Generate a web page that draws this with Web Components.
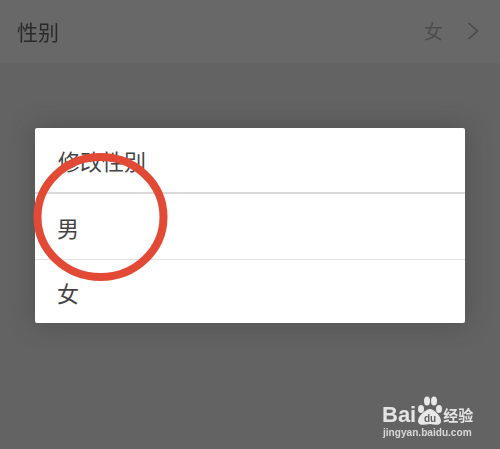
<!DOCTYPE html>
<html lang="zh">
<head>
<meta charset="utf-8">
<style>
html,body{margin:0;padding:0;width:500px;height:449px;overflow:hidden;background:#636363;}
body{font-family:"Noto Sans CJK SC","Liberation Sans",sans-serif;}
</style>
</head>
<body>
<settings-row label="性别" value="女"></settings-row>
<gender-dialog title-text="修改性别">
  <dialog-option>男</dialog-option>
  <dialog-option>女</dialog-option>
</gender-dialog>
<red-circle></red-circle>
<baidu-mark></baidu-mark>

<script>
//top row of the settings page, dimmed by the dialog
class SettingsRow extends HTMLElement {
  constructor(){
    super();
    this.attachShadow({mode:"open"});
    this.shadowRoot.innerHTML = `
    <style>
      :host{display:flex;align-items:center;justify-content:space-between;height:63px;padding:0 21px 0 17px;background:#686868;border-bottom:1px solid #646464;box-sizing:content-box;}
      .label{font-size:21px;color:#2a2a2a;margin-top:-2px;filter:blur(.3px);}
      .right{display:flex;align-items:center;gap:24px;margin-top:-2px;}
      .value{font-size:19px;color:#4c4c4c;filter:blur(.3px);}
      svg{display:block;}
    </style>
    <span class="label"></span>
    <div class="right">
      <span class="value"></span>
      <svg width="12" height="18" viewBox="0 0 12 18"><path d="M1.5 1 L10.5 9 L1.5 17" fill="none" stroke="#4a4a4a" stroke-width="1.6"/></svg>
    </div>`;
  }
  connectedCallback(){
    this.shadowRoot.querySelector(".label").textContent = this.getAttribute("label");
    this.shadowRoot.querySelector(".value").textContent = this.getAttribute("value");
  }
}

class GenderDialog extends HTMLElement {
  constructor(){
    super();
    this.attachShadow({mode:"open"});
    this.shadowRoot.innerHTML = `
    <style>
      :host{display:block;width:430px;margin:64px 0 0 35px;background:#fff;border-radius:2px;box-shadow:0 0 26px rgba(50,50,50,.4);}
      .title{display:flex;align-items:center;height:64px;padding-left:23px;font-size:22px;color:#444;border-bottom:2px solid #dadada;}
    </style>
    <div class="title"></div>
    <slot></slot>`;
  }
  connectedCallback(){
    this.shadowRoot.querySelector(".title").textContent = this.getAttribute("title-text");
  }
}

class DialogOption extends HTMLElement {
  constructor(){
    super();
    this.attachShadow({mode:"open"});
    this.shadowRoot.innerHTML = `
    <style>
      :host{display:flex;align-items:center;height:65px;padding-left:22px;font-size:22px;color:#444;}
      :host(:not(:last-child)){border-bottom:1px solid #e2e2e2;}
      :host(:last-child){height:63px;}
    </style>
    <slot></slot>`;
  }
}

//hand drawn marker on top of the screenshot
class RedCircle extends HTMLElement {
  constructor(){
    super();
    this.attachShadow({mode:"open"});
    this.shadowRoot.innerHTML = `
    <style>
      :host{position:absolute;left:30px;top:150px;width:140px;height:134px;}
      svg{display:block;}
    </style>
    <svg width="140" height="134" viewBox="0 0 140 134"><ellipse cx="70.5" cy="67" rx="63" ry="60" fill="none" stroke="#e24a35" stroke-width="8"/></svg>`;
  }
}

class BaiduMark extends HTMLElement {
  constructor(){
    super();
    this.attachShadow({mode:"open"});
    this.shadowRoot.innerHTML = `
    <style>
      :host{position:absolute;left:382px;top:394px;width:114px;height:46px;color:#e4e4e4;font-family:"Liberation Sans",sans-serif;filter:blur(.4px);}
      .top{display:flex;align-items:flex-end;height:33px;font-weight:700;font-size:22px;line-height:24px;}
      svg{display:block;margin:0 0 0 1px;}
      .cn{font:700 15px/18px "Noto Sans CJK SC",sans-serif;margin-left:-1px;margin-bottom:3px;}
      .url{font-size:10.1px;font-weight:700;line-height:12px;white-space:nowrap;margin-left:1px;color:#d8d8d8;}
    </style>
    <div class="top">
      <span>Bai</span>
      <svg width="27" height="33" viewBox="0 0 27 33">
        <g fill="#e8e8e8">
          <ellipse cx="4" cy="15" rx="3" ry="4"/><ellipse cx="10" cy="7" rx="3" ry="4.5"/><ellipse cx="17" cy="7" rx="3" ry="4.5"/><ellipse cx="22" cy="15" rx="3" ry="4"/>
          <path d="M13 15 C17 15 24 22 24 27 C24 32 18 31 13 30 C8 31 1 32 1 27 C1 22 9 15 13 15Z"/>
        </g>
        <text x="13" y="28" text-anchor="middle" font-size="10" font-weight="700" fill="#636363" font-family="Liberation Sans">du</text>
      </svg>
      <span class="cn">经验</span>
    </div>
    <div class="url">jingyan.baidu.com</div>`;
  }
}

customElements.define("settings-row", SettingsRow);
customElements.define("gender-dialog", GenderDialog);
customElements.define("dialog-option", DialogOption);
customElements.define("red-circle", RedCircle);
customElements.define("baidu-mark", BaiduMark);
</script>
</body>
</html>
